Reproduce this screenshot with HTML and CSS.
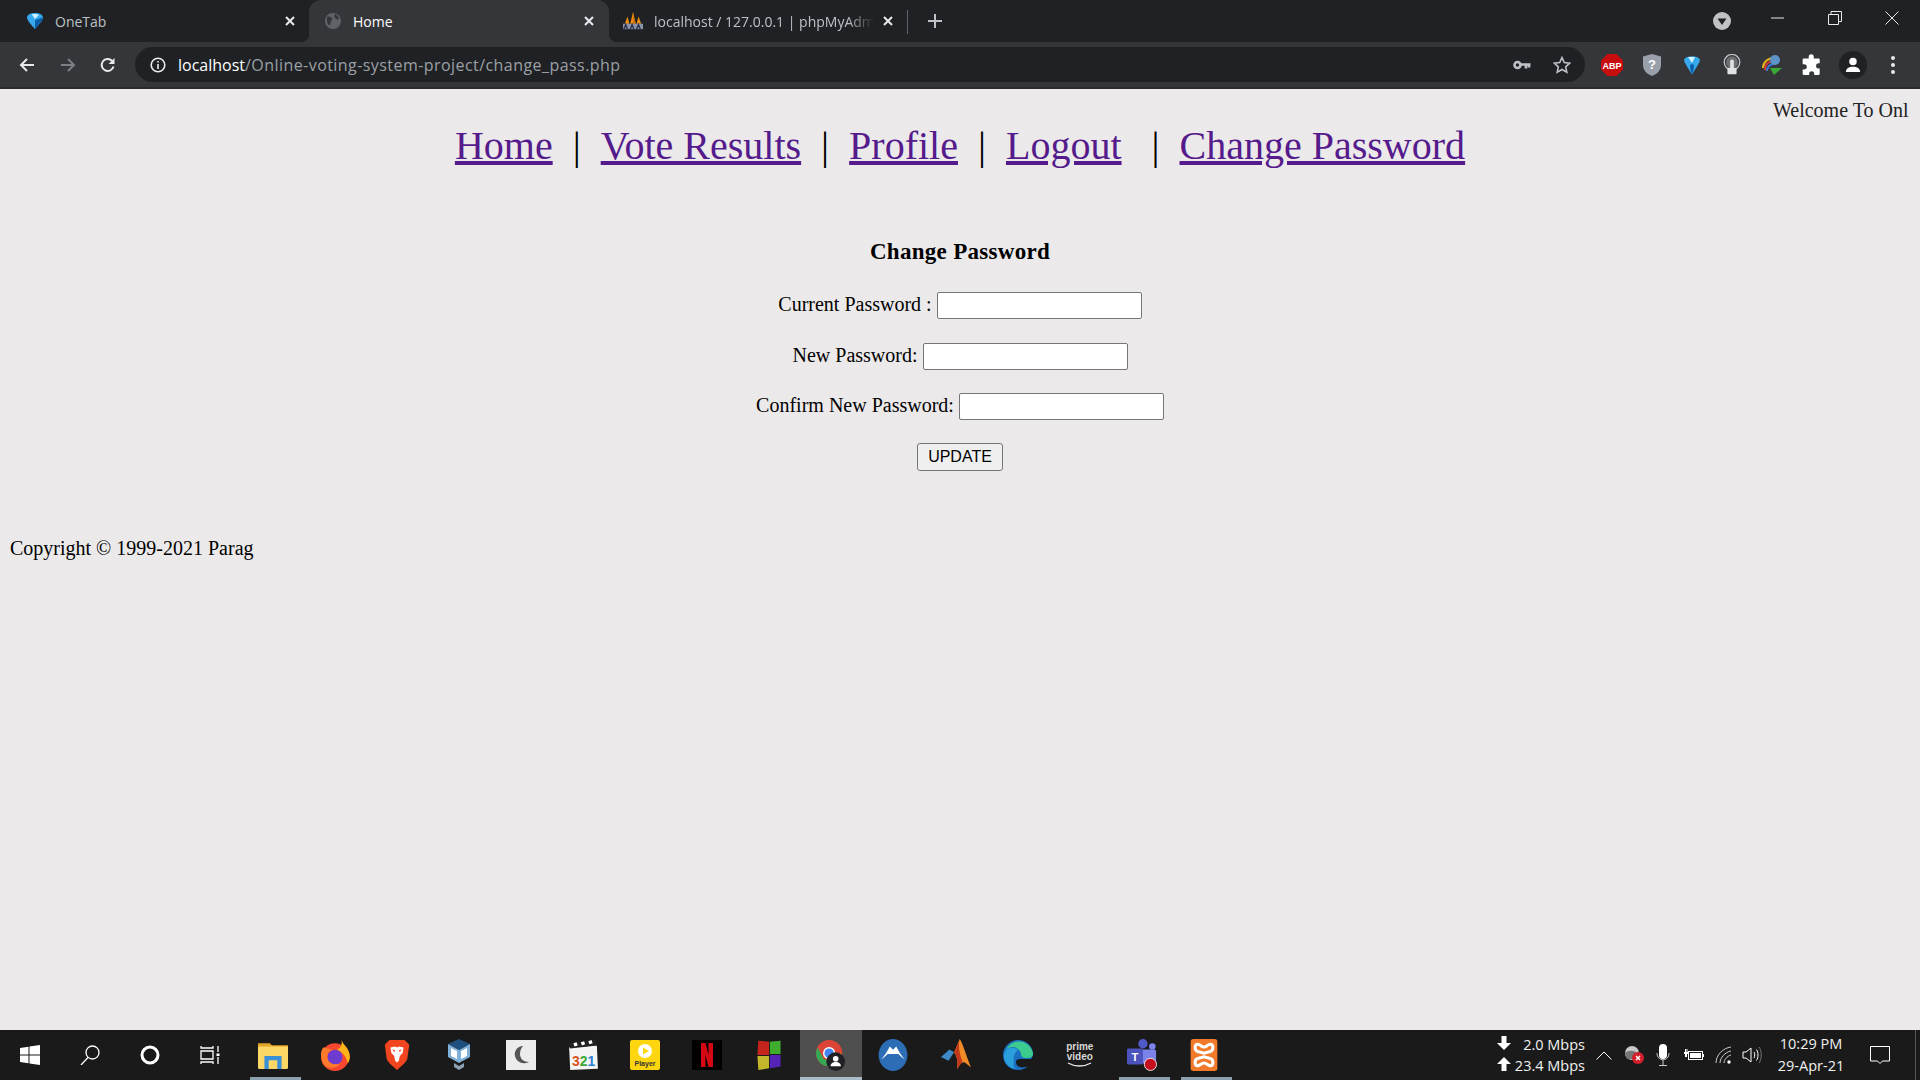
FILE: index.html
```html
<!DOCTYPE html>
<html lang="en">
<head>
  <meta charset="UTF-8">
  <title>Home</title>
  <link rel="stylesheet" href="styles.css">
</head>
<body>
  <!-- Browser tab strip -->
  <div class="tabstrip">
    <div class="tab">
      <svg class="favicon" viewBox="3 0 10 16" preserveAspectRatio="none"><path fill="#35a8ee" d="M8 0c3 0 5 2 5 4.500 0 3-3 8-5 11.500C6 12.500 3 7.500 3 4.500 3 2 5 0 8 0z"/><path fill="#cfeefd" d="M6 1.500c1.500-.7 3.500-.5 4.500.5L8 6z"/><path fill="#0b5fa8" d="M8 16c2-3.500 5-8.500 5-11.500L8 7z"/></svg>
      <span class="tab-title">OneTab</span>
      <svg class="tab-close" viewBox="0 0 12 12"><path d="M2 2l8 8M10 2l-8 8"/></svg>
    </div>
    <div class="tab tab-active">
      <svg class="favicon" viewBox="0 0 16 16"><circle cx="8" cy="8" r="8" fill="#5f6368"/><path fill="#35363a" d="M2 4c2-1 4 0 5 1s0 2-1 3 0 3-1 4-3-2-3-4zM10 1c2 1 4 3 4 5-1 1-3 0-4-1s-1-3 0-4z"/></svg>
      <span class="tab-title">Home</span>
      <svg class="tab-close" viewBox="0 0 12 12"><path d="M2 2l8 8M10 2l-8 8"/></svg>
    </div>
    <div class="tab tab-last">
      <svg class="favicon favicon-pma" viewBox="0 0 22 20"><path fill="#f29111" d="M11 0l3 13H8zM5 5l2 8H2zM17 5l3 8h-5z"/><path fill="#c9700a" d="M11 0l3 13h-3z"/><rect y="13" width="22" height="6" fill="#8a93a8"/><path stroke="#28304a" stroke-width="1.500" fill="none" d="M1 19l2-5 2 5M8 19l2-5 2 5M15 19l2-5 2 5"/></svg>
      <span class="tab-title tab-fade">localhost / 127.0.0.1 | phpMyAdm</span>
      <svg class="tab-close" viewBox="0 0 12 12"><path d="M2 2l8 8M10 2l-8 8"/></svg>
    </div>
    <svg class="new-tab" viewBox="0 0 14 14"><path d="M7 0v14M0 7h14"/></svg>
    <div class="strip-right">
      <svg class="tab-search" viewBox="0 0 18 18"><circle cx="9" cy="9" r="9" fill="#c0c2c6"/><path fill="#202124" d="M4.500 6.500h9L9 13z"/></svg>
      <div class="win-btn"><svg viewBox="0 0 14 14"><path d="M0 7h13"/></svg></div>
      <div class="win-btn"><svg viewBox="0 0 14 14"><path d="M.5 3.500h10v10H.5zM3 3.500V.5h10.500v10h-3"/></svg></div>
      <div class="win-btn"><svg viewBox="0 0 14 14"><path d="M.5.5l13 13M13.500.5l-13 13"/></svg></div>
    </div>
  </div>

  <!-- Toolbar with address bar -->
  <div class="toolbar">
    <div class="tool-btn"><svg viewBox="0 0 16 16"><path d="M15 8H2M8 2L2 8l6 6"/></svg></div>
    <div class="tool-btn tool-off"><svg viewBox="0 0 16 16"><path d="M1 8h13M8 2l6 6-6 6"/></svg></div>
    <div class="tool-btn"><svg viewBox="0 0 16 16"><path d="M13.500 9.500A6 6 0 1 1 12 3.800"/><path class="fill-white" d="M14.500 1v6h-6z"/></svg></div>
    <div class="omnibox">
      <svg class="info-icon" viewBox="0 0 16 16"><circle cx="8" cy="8" r="6.800"/><path d="M8 7v5M8 4v1.600"/></svg>
      <span class="url-host">localhost</span><span class="url-path">/Online-voting-system-project/change_pass.php</span>
      <div class="omni-icons">
        <svg class="key-icon" viewBox="0 0 18 10"><circle cx="4.500" cy="5" r="3"/><path d="M8 4.500h9.500M13 5v3.500M16 5v2.500"/></svg>
        <svg class="star-icon" viewBox="0 0 18 18"><path d="M9 1.500l2.300 5 5.400.6-4 3.700 1.100 5.400L9 13.500l-4.800 2.700 1.100-5.400-4-3.700 5.400-.6z"/></svg>
      </div>
    </div>
    <div class="ext-btn">
      <svg viewBox="0 0 22 22"><path fill="#c70d0d" d="M6.500 0h9L22 6.500v9L15.500 22h-9L0 15.500v-9z"/><text class="abp-text" x="11" y="14.600" text-anchor="middle">ABP</text></svg>
    </div>
    <div class="ext-btn">
      <svg viewBox="0 0 20 22"><path fill="#9aa0ab" d="M10 0l9 2.500V11c0 6-5 9.500-9 11-4-1.500-9-5-9-11V2.500z"/><text class="shield-text" x="10" y="15" text-anchor="middle">?</text></svg>
    </div>
    <div class="ext-btn">
      <svg viewBox="0 0 18 22"><path fill="#35a8ee" d="M1 5.500C3 1 15 1 17 5.500c0 3-5 10-8 15-3-5-8-12-8-15z"/><path fill="#d8f3fe" d="M5 3l7 0-3 6z"/><path fill="#0b5fa8" d="M9 20.500c-1-3-2-6-2-9l2-2 2 2c0 3-1 6-2 9z"/></svg>
    </div>
    <div class="ext-btn">
      <svg viewBox="0 0 20 24"><circle cx="10" cy="9" r="8.500" fill="none" stroke="#c6c8cc" stroke-width="1.400"/><circle cx="10" cy="9" r="6.500" fill="#6d6f73"/><rect x="5" y="15" width="10" height="7" rx="1" fill="#e0e1e3"/><rect x="8" y="6" width="4" height="11" rx="2" fill="#e0e1e3"/></svg>
    </div>
    <div class="ext-btn">
      <svg viewBox="0 0 22 22"><path fill="none" stroke="#e2b21c" stroke-width="2" d="M2 14C2 8 7 4 13 4"/><path fill="none" stroke="#d63a2f" stroke-width="2" d="M4 16C4 10 8 7 13 7"/><path fill="none" stroke="#3a7bd5" stroke-width="2" d="M6 17c0-4 3-7 7-7"/><circle cx="14" cy="6" r="5" fill="#5c93c9"/><path fill="#3aa935" d="M9 14h12l-8 7z"/></svg>
    </div>
    <div class="ext-btn">
      <svg viewBox="0 0 20 20"><path fill="#fff" d="M7 2.500a2.300 2.300 0 0 1 4.600 0V4H16a1 1 0 0 1 1 1v3.500h-1a2.300 2.300 0 0 0 0 4.600h1V18a1 1 0 0 1-1 1h-4v-1a2.300 2.300 0 0 0-4.600 0v1H2.500a1 1 0 0 1-1-1v-4H3a2.300 2.300 0 0 0 0-4.600H1.500V5a1 1 0 0 1 1-1H7z"/></svg>
    </div>
    <div class="ext-btn avatar">
      <svg viewBox="0 0 18 18"><circle cx="9" cy="5" r="4.200" fill="#fff"/><path fill="#fff" d="M1 17c0-4 3.500-6 8-6s8 2 8 6z"/></svg>
    </div>
    <div class="ext-btn menu-dots"><i></i><i></i><i></i></div>
  </div>

  <!-- Page content -->
  <div class="page">
    <div class="welcome">Welcome To Onl</div>
    <div class="nav">
      <a href="#">Home</a>&nbsp;&nbsp;|&nbsp;&nbsp;<a href="#">Vote Results</a>&nbsp;&nbsp;|&nbsp;&nbsp;<a href="#">Profile</a>&nbsp;&nbsp;|&nbsp;&nbsp;<a href="#">Logout</a>&nbsp;&nbsp;&nbsp;|&nbsp;&nbsp;<a href="#">Change Password</a>
    </div>
    <form class="pass-form">
      <h3>Change Password</h3>
      <p>Current Password : <input type="password"></p>
      <p>New Password: <input type="password"></p>
      <p>Confirm New Password: <input type="password"></p>
      <p class="submit-row"><button type="button">UPDATE</button></p>
    </form>
    <div class="copyright">Copyright © 1999-2021 Parag</div>
  </div>

  <!-- Windows taskbar -->
  <div class="taskbar">
    <div class="sys-btn"><svg class="w20" viewBox="0 0 20 20"><path fill="#fff" d="M0 3l8.500-1.200v7.700H0zM9.500 1.600L20 0v9.500H9.500zM0 10.500h8.500v7.700L0 17zM9.500 10.500H20V20L9.500 18.400z"/></svg></div>
    <div class="sys-btn"><svg class="w20 line" viewBox="0 0 20 20"><circle cx="12.500" cy="7.500" r="6.500"/><path d="M8 12.500L1 20"/></svg></div>
    <div class="sys-btn"><svg class="w20 line thick" viewBox="0 0 20 20"><circle cx="10" cy="10" r="8"/></svg></div>
    <div class="sys-btn"><svg class="w20 line" viewBox="0 0 20 20"><path d="M1 1v2h12V1M1 6h12v8H1zM1 19v-2h12v2M18 1v6M18 12v7"/><path class="thick-dot" d="M16.500 8.500h3v2.500h-3z"/></svg></div>
    <div class="app app-open"><svg viewBox="0 0 28 28"><path fill="#e0a526" d="M0 3h11l2 2h15v4H0z"/><rect y="6" width="28" height="21" rx="1" fill="#fdd766"/><path fill="#3b8fd4" d="M6 27V15h16v12h-4v-8h-8v8z"/></svg></div>
    <div class="app"><svg viewBox="0 0 28 30"><circle cx="14" cy="17" r="13" fill="#f9482f"/><path fill="#ffb31a" d="M20 0c1 6 8 8 8 17 0 2-1 4-2 6-1-6-5-11-10-13 4-2 5-6 4-10z"/><circle cx="14" cy="17" r="7" fill="#6e3bd1"/><path fill="#ff7a2a" d="M3 8c3 0 5 2 9 2-4 1-6 4-5 8 1 5 7 7 12 5-3 4-9 5-13 3C1 23-1 13 3 8z"/></svg></div>
    <div class="app"><svg viewBox="0 0 26 34"><path fill="#f1441f" d="M5 1h16l2 2 3 3-2 15c-1 4-8 9-11 12-3-3-10-8-11-12L0 6l3-3z"/><path fill="#fff" d="M6 9l5-1 2 1 2-1 5 1-1 6-3 3-1 5-2 2-2-2-1-5-3-3z"/><path fill="#f1441f" d="M8 11l3 1-1 2zM18 11l-3 1 1 2z"/></svg></div>
    <div class="app"><svg viewBox="0 0 26 32"><path fill="#1f4f7d" d="M13 0l11 5-11 6L2 5z"/><path fill="#7fb0d8" d="M2 5l11 6v13L2 18zM24 5l-11 6v13l11-6z"/><path fill="#fff" d="M5 9l6 3v8l-6-3zM21 9l-6 3v8l6-3z"/><path fill="#8ca0b3" d="M8 24l5 3 5-3v4l-5 3-5-3z"/></svg></div>
    <div class="app"><svg class="moon" viewBox="0 0 30 30"><rect width="30" height="30" fill="#ececec"/><path fill="#555" d="M16 6c-5 1-8 5-7 10s6 8 11 7c1 0 3-1 3-1-5 0-9-3-9-8 0-3 1-6 3-8z"/></svg></div>
    <div class="app"><svg viewBox="0 0 28 30"><path fill="#f4f4f4" d="M1 8l26-2 1 22-26 1z"/><path fill="#222" d="M1 4l25-4 1 6L2 9z"/><path fill="#fff" d="M5 4l3-1 1 3-3 1zM12 3l3-1 1 3-3 1zM19 2l3-1 1 3-3 1z"/><text class="mpc-text" x="14.500" y="25" text-anchor="middle"><tspan fill="#d9541e">3</tspan><tspan fill="#3aa935">2</tspan><tspan fill="#2f7fd4">1</tspan></text></svg></div>
    <div class="app"><svg viewBox="0 0 30 30"><rect width="30" height="30" rx="2" fill="#fdd60f"/><circle cx="15" cy="11" r="7" fill="#fff"/><path fill="#fdd60f" d="M13 7.500l6 3.500-6 3.500z"/><text class="km-text" x="15" y="26" text-anchor="middle">Player</text></svg></div>
    <div class="app"><svg viewBox="0 0 30 30"><rect width="30" height="30" fill="#000"/><path fill="#d40813" d="M9 3h4.500l3 12V3H21v24h-4.500l-3-12v12H9z"/></svg></div>
    <div class="app"><svg viewBox="0 0 28 36"><path fill="#c7241e" d="M2 2l12 1v15H1z"/><path fill="#3fae2f" d="M15 3l12-1v15H15z"/><path fill="#c2b72a" d="M1 19h13v14L2 35z"/><path fill="#5523b5" d="M15 18h12v13l-12 2z"/></svg></div>
    <div class="app app-active"><svg viewBox="0 0 32 34"><circle cx="14" cy="15" r="14" fill="#db4437"/><path fill="#34a853" d="M0 15a14 14 0 0 0 16 14l5-9-7 3-6-2-6-12C1 11 0 13 0 15z"/><path fill="#fbbc05" d="M14 29c4 0 8-2 10-5l3-9H14z"/><circle cx="14" cy="15" r="6.500" fill="#fff"/><circle cx="14" cy="15" r="5" fill="#4285f4"/><circle cx="21" cy="24" r="10" fill="#202124"/><circle cx="21" cy="21" r="3" fill="#fff"/><path fill="#fff" d="M15.500 29c0-3 2.500-4.500 5.500-4.500s5.500 1.500 5.500 4.500z"/></svg></div>
    <div class="app"><svg viewBox="0 0 28 30"><ellipse cx="14" cy="15" rx="13.500" ry="15" fill="#2c6db5"/><path fill="#fff" d="M3 19c3-3 6-8 8-12l3 3 3-3c2 4 5 9 8 12-2-1-4-3-6-5l-5 0-5 0c-2 2-4 4-6 5z"/></svg></div>
    <div class="app"><svg viewBox="0 0 32 34"><path fill="#3d8ac7" d="M0 19l9-8 5 3-6 9z"/><path fill="#f08c28" d="M14 14L20 0c4 6 8 22 12 30-4-2-6-6-9-5-3 1-4 5-6 7 1-6 1-12-3-18z"/><path fill="#c13a1c" d="M20 0c-2 8 0 16 3 25-3 1-4 5-6 7 1-6 1-12-3-18z"/></svg></div>
    <div class="app"><svg viewBox="0 0 30 30"><path fill="#1a6fc0" d="M15 0C7 0 0 7 0 15c0 9 7 15 15 15 5 0 8-2 10-4-6 3-12 1-12-4 0-2 2-3 4-3h11c1-1 2-3 2-5C30 6 23 0 15 0z"/><path fill="#3ccb8f" d="M3 10C6 3 14 0 20 2c6 2 10 8 10 12 0 3-3 4-6 4-4 0-6-1-6-4 0-3-4-7-8-7-3 0-6 1-7 3z"/><path fill="#2a9fdc" d="M3 10c3-3 9-3 12 0-3 2-5 6-4 11-1 3-1 6 2 8C5 28-3 19 3 10z"/></svg></div>
    <div class="app prime"><span>prime</span><span>video</span><svg viewBox="0 0 26 6"><path fill="none" stroke="#e6e6e6" stroke-width="1.300" d="M1 1c7 4 16 4 23 0"/></svg></div>
    <div class="app app-open"><svg viewBox="0 0 32 34"><circle cx="17" cy="5" r="5" fill="#5059c9"/><circle cx="27" cy="8" r="3.500" fill="#7b83eb"/><rect x="11" y="11" width="20" height="15" rx="2" fill="#7b83eb"/><rect y="10" width="17" height="17" rx="1.500" fill="#4b53bc"/><text class="teams-text" x="8.500" y="23" text-anchor="middle">T</text><circle cx="25" cy="27" r="6.500" fill="#c50f1f" stroke="#e8e8e8"/></svg></div>
    <div class="app app-open"><svg viewBox="0 0 30 36"><rect width="30" height="36" rx="3" fill="#f07a2a"/><path fill="none" stroke="#fff" stroke-width="3.400" d="M8 6c-4 0-4 7 0 8l7 2 7-2c4-1 4-8 0-8-3 0-4 3-7 3S11 6 8 6zM8 30c-4 0-4-7 0-8l7-2 7 2c4 1 4 8 0 8-3 0-4-3-7-3s-4 3-7 3z"/></svg></div>

    <div class="tray">
      <div class="net-speed">
        <div class="net-row"><svg viewBox="0 0 14 14"><path fill="#fff" d="M4.500 0h5v7H14l-7 7-7-7h4.500z"/></svg><span>2.0 Mbps</span></div>
        <div class="net-row"><svg viewBox="0 0 14 14"><path fill="#fff" d="M4.500 14h5V7H14L7 0 0 7h4.500z"/></svg><span>23.4 Mbps</span></div>
      </div>
      <div class="tray-icons">
        <svg class="chevron" viewBox="0 0 16 9"><path d="M.5 8.500L8 1l7.500 7.500"/></svg>
        <svg class="cloud" viewBox="0 0 22 20"><circle cx="9" cy="8" r="7" fill="#c9c9c9"/><path fill="#777" d="M2 8c3-3 9-3 12 0v6H4z"/><circle cx="15" cy="13" r="6" fill="#d21f2b"/><path stroke="#fff" stroke-width="1.400" d="M13 11l4 4M17 11l-4 4"/></svg>
        <svg class="mic" viewBox="0 0 14 22"><rect x="3" y="0" width="8" height="15" rx="4" fill="#fff"/><path fill="none" stroke="#ccc" d="M1 9c0 9 12 9 12 0M7 16v5M3 21.500h8"/></svg>
        <svg class="battery" viewBox="0 0 20 14"><rect x="4.500" y="3.500" width="14" height="8" fill="none" stroke="#fff"/><rect x="6" y="5" width="11" height="5" fill="#fff"/><path fill="#fff" d="M0 4h4v2H3v3H1V6H0zM19 6h1v3h-1z"/><path stroke="#fff" d="M1.500 1v3M3 1v3"/></svg>
        <svg class="wifi" viewBox="0 0 18 18"><path fill="none" stroke="#ccc" d="M1 17C1 9 8 2 16 1M5 17c0-5 5-11 11-12M9 17c0-3 3-7 7-8"/><circle cx="14" cy="16" r="1.700" fill="#fff"/></svg>
        <svg class="speaker" viewBox="0 0 20 20"><path fill="none" stroke="#fff" d="M1 7h3l5-4v14l-5-4H1zM12 7c1 2 1 4 0 6M14.500 4.500c2 3 2 8 0 11"/><path fill="none" stroke="#777" d="M17 2c3 4 3 12 0 16"/></svg>
      </div>
      <div class="clock"><span>10:29 PM</span><span>29-Apr-21</span></div>
      <svg class="notify" viewBox="0 0 20 20"><path d="M.5 1.500h19v14.500h-7l-2.500 2.500-2.500-2.500h-7z"/></svg>
      <div class="show-desktop"></div>
    </div>
  </div>
</body>
</html>
```
FILE: styles.css
```css
/* Basic Reset */
* {
  box-sizing: border-box;
}

body {
  margin: 0;
  height: 1080px;
  overflow: hidden;
  display: flex;
  flex-direction: column;
  background-color: #ebe9ea;
  font-family: "Liberation Serif", serif;
}

svg {
  display: block;
}

/* Tab strip */
.tabstrip {
  height: 42px;
  display: flex;
  align-items: center;
  background-color: #202124;
  font-family: "Open Sans", sans-serif;
  font-size: 14px;
  color: #bdc1c6;
}

.tab {
  position: relative;
  width: 300px;
  height: 42px;
  flex-shrink: 0;
  display: flex;
  align-items: center;
  padding: 0 14px 0 16px;
}

.tab:first-child {
  width: 309px;
  padding-left: 27px;
  padding-right: 13px;
}

.tab-active {
  background-color: #35363a;
  border-radius: 12px 12px 0 0;
  color: #fff;
}

.tab-active::before,
.tab-active::after {
  content: "";
  position: absolute;
  bottom: 0;
  width: 8px;
  height: 8px;
}

.tab-active::before {
  left: -8px;
  background: radial-gradient(circle at 0 0, #202124 8px, #35363a 8.500px);
}

.tab-active::after {
  right: -8px;
  background: radial-gradient(circle at 100% 0, #202124 8px, #35363a 8.500px);
}

.tab-last {
  width: 299px;
  padding-left: 14px;
  padding-right: 14px;
}

.tab-last::after {
  content: "";
  position: absolute;
  right: 0;
  top: 10px;
  height: 24px;
  width: 1px;
  background-color: #5f6368;
}

.favicon {
  width: 16px;
  height: 16px;
  margin-right: 12px;
  flex-shrink: 0;
}

.favicon-pma {
  width: 20px;
  height: 20px;
  margin-right: 11px;
}

.tab-title {
  flex: 1;
  overflow: hidden;
  white-space: nowrap;
}

.tab-fade {
  -webkit-mask-image: linear-gradient(to right, #000 88%, transparent);
  mask-image: linear-gradient(to right, #000 88%, transparent);
}

.tab-close {
  width: 12px;
  height: 12px;
  margin-left: 8px;
  fill: none;
  stroke: #e8eaed;
  stroke-width: 2;
  flex-shrink: 0;
}

.new-tab {
  width: 14px;
  height: 14px;
  margin-left: 20px;
  fill: none;
  stroke: #bdc1c6;
  stroke-width: 2;
}

.strip-right {
  margin-left: auto;
  display: flex;
  align-items: flex-start;
  height: 42px;
}

.tab-search {
  width: 18px;
  height: 18px;
  margin: 12px 18px 0 0;
}

.win-btn {
  width: 57px;
  height: 36px;
  display: flex;
  align-items: center;
  justify-content: center;
}

.win-btn svg {
  width: 14px;
  height: 14px;
  fill: none;
  stroke: #e8eaed;
  stroke-width: 1;
}

/* Toolbar */
.toolbar {
  height: 47px;
  display: flex;
  align-items: flex-start;
  padding: 5px 8px 0 7px;
  background-color: #35363a;
  border-bottom: 2px solid #2a2b2e;
}

.tool-btn {
  width: 40.500px;
  height: 35px;
  display: flex;
  align-items: center;
  justify-content: center;
}

.tool-btn svg {
  width: 16px;
  height: 16px;
  fill: none;
  stroke: #e8eaed;
  stroke-width: 2;
}

.tool-off svg {
  stroke: #7c7f84;
}

.fill-white {
  fill: #e8eaed;
  stroke: none;
}

.omnibox {
  width: 1450px;
  height: 35px;
  margin: 0 7px 0 6.500px;
  display: flex;
  align-items: center;
  padding: 0 0 0 15px;
  background-color: #202124;
  border-radius: 18px;
  font-family: "Open Sans", sans-serif;
  font-size: 16px;
  white-space: nowrap;
}

.info-icon {
  width: 16px;
  height: 16px;
  margin-right: 12px;
  fill: none;
  stroke: #e8eaed;
  stroke-width: 1.600;
}

.url-host {
  color: #fff;
}

.url-path {
  color: #9aa0a6;
  letter-spacing: .44px;
}

.omni-icons {
  margin-left: auto;
  display: flex;
  align-items: center;
  padding-right: 14px;
}

.key-icon {
  width: 18px;
  height: 10px;
  fill: none;
  stroke: #bdc1c6;
  stroke-width: 2.600;
}

.star-icon {
  width: 18px;
  height: 18px;
  margin-left: 22px;
  fill: none;
  stroke: #bdc1c6;
  stroke-width: 1.600;
}

.ext-btn {
  width: 40px;
  height: 35px;
  display: flex;
  align-items: center;
  justify-content: center;
}

.ext-btn svg {
  width: 22px;
  height: 22px;
}

.abp-text {
  font-family: "Liberation Sans", sans-serif;
  font-size: 9px;
  font-weight: bold;
  fill: #fff;
}

.shield-text {
  font-family: "Liberation Sans", sans-serif;
  font-size: 13px;
  font-weight: bold;
  fill: #fff;
}

.avatar {
  width: 28px;
  height: 28px;
  margin: 4px 6px 0 7px;
  background-color: #202124;
  border-radius: 50%;
}

.avatar svg {
  width: 16px;
  height: 16px;
}

.menu-dots {
  width: 39px;
  flex-direction: column;
  gap: 3px;
}

.menu-dots i {
  width: 4px;
  height: 4px;
  background-color: #e8eaed;
  border-radius: 50%;
}

/* Page */
.page {
  flex: 1;
  font-size: 20px;
  color: #000;
}

.welcome {
  width: 139px;
  height: 23px;
  margin: 10px 8px 0 auto;
  white-space: nowrap;
  color: #222;
}

.nav {
  height: 47px;
  padding-top: 1px;
  text-align: center;
  font-size: 40px;
  line-height: 46px;
}

.nav a {
  color: #551a8b;
}

.pass-form {
  margin-top: 70px;
  text-align: center;
}

.pass-form h3 {
  margin: 0 0 28px;
  font-size: 23px;
  line-height: 25px;
  letter-spacing: .3px;
}

.pass-form p {
  margin: 0;
  height: 50.500px;
}

.pass-form .submit-row {
  margin-top: -1px;
}

.pass-form input {
  width: 205px;
  height: 27px;
  padding: 1px 2px;
  background: #fff;
  border: 1px solid #767676;
  border-radius: 2px;
  vertical-align: 1px;
}

.pass-form button {
  width: 86px;
  height: 28px;
  padding: 0;
  font-family: "Liberation Sans", sans-serif;
  font-size: 16px;
  color: #000;
  background-color: #efefef;
  border: 1px solid #767676;
  border-radius: 3px;
}

.copyright {
  margin: 44px 0 0 10px;
}

/* Taskbar */
.taskbar {
  height: 50px;
  display: flex;
  align-items: stretch;
  background-color: #1a1a1a;
  font-family: "Open Sans", sans-serif;
  color: #f0f0f0;
}

.sys-btn {
  width: 60px;
  display: flex;
  align-items: center;
  justify-content: center;
}

.sys-btn:nth-child(4) {
  margin-right: 1.500px;
}

.w20 {
  width: 20px;
  height: 20px;
}

.line {
  fill: none;
  stroke: #fff;
  stroke-width: 1.300;
}

.thick {
  stroke-width: 3;
}

.thick-dot {
  fill: #fff;
  stroke: none;
}

.app {
  position: relative;
  width: 62.100px;
  display: flex;
  flex-direction: column;
  align-items: center;
  justify-content: center;
}

.app svg {
  width: 30px;
  height: 32px;
}

.app-open::after {
  content: "";
  position: absolute;
  left: 8px;
  right: 3px;
  bottom: 0;
  height: 3px;
  background-color: #8ba0ad;
}

.app-active {
  background-color: #4f4f4f;
}

.app-active::after {
  content: "";
  position: absolute;
  left: 0;
  right: 0;
  bottom: 0;
  height: 3px;
  background-color: #a9bcc8;
}

.mpc-text {
  font-family: "Liberation Sans", sans-serif;
  font-size: 13px;
  font-weight: bold;
}

.km-text {
  font-family: "Liberation Sans", sans-serif;
  font-size: 7px;
  font-weight: bold;
  fill: #333;
}

.teams-text {
  font-family: "Liberation Sans", sans-serif;
  font-size: 12px;
  font-weight: bold;
  fill: #fff;
}

.prime {
  font-family: "Liberation Sans", sans-serif;
  font-size: 10px;
  font-weight: bold;
  line-height: 10px;
  color: #d8d8d8;
}

.prime svg {
  width: 26px;
  height: 6px;
}

.tray {
  margin-left: auto;
  display: flex;
  align-items: center;
  font-size: 14.500px;
}

.net-speed {
  width: 88px;
  display: flex;
  flex-direction: column;
  gap: 2px;
}

.net-row {
  height: 19px;
  display: flex;
  align-items: center;
  justify-content: space-between;
  white-space: nowrap;
}

.net-row svg {
  width: 14px;
  height: 14px;
  margin-top: -4px;
}

.tray-icons {
  display: flex;
  align-items: center;
  gap: 11px;
  padding: 0 11px;
}

.chevron {
  width: 16px;
  height: 9px;
  fill: none;
  stroke: #fff;
}

.cloud {
  width: 22px;
  height: 20px;
}

.mic {
  width: 14px;
  height: 22px;
}

.battery {
  width: 20px;
  height: 14px;
  margin-left: 3px;
}

.wifi {
  width: 18px;
  height: 18px;
}

.speaker {
  width: 20px;
  height: 20px;
  margin-left: -2px;
}

.clock {
  width: 76px;
  display: flex;
  flex-direction: column;
  align-items: center;
  gap: 2px;
  line-height: 20px;
}

.notify {
  width: 20px;
  height: 20px;
  margin-left: 21px;
  fill: none;
  stroke: #fff;
}

.show-desktop {
  width: 1px;
  height: 50px;
  margin-left: 25px;
  margin-right: 4px;
  background-color: #555;
}
```
